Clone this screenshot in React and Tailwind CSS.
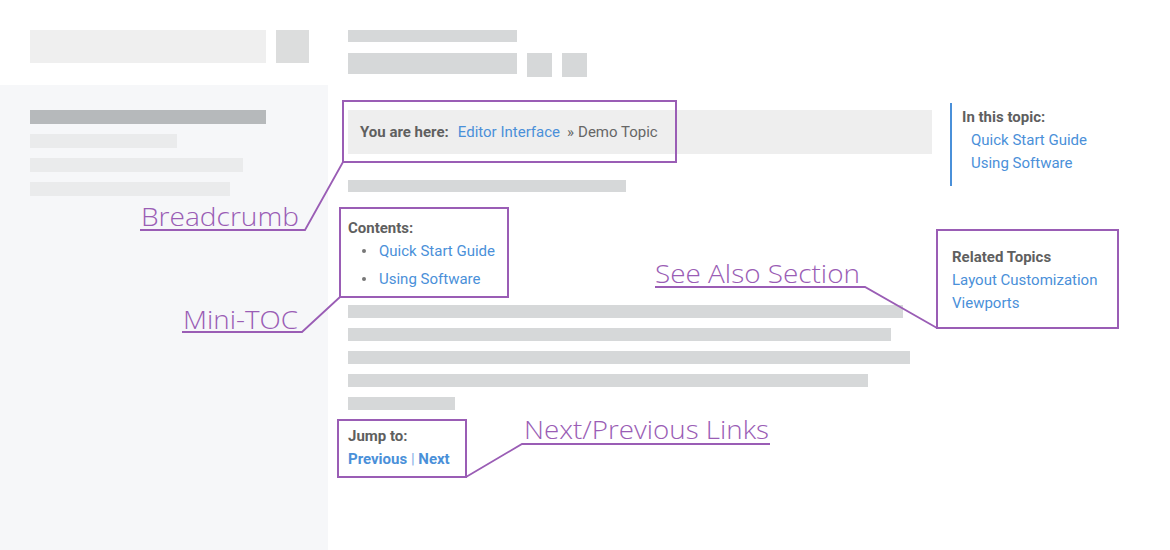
import React from "react";

/* ---------------- Skeleton pieces ---------------- */
const Bar = ({ className = "" }) => <div className={`bg-[#d6d8d9] ${className}`} />;

const PURPLE = "#9a5db5";

/* ---------------- Annotation overlay ---------------- */
const callouts = [
  { label: "Breadcrumb", x: 141, y: 226, w: 158, line: "140,230 305,230 343,162" },
  { label: "Mini-TOC", x: 183, y: 329, w: 115, line: "182,332 302,332 340,297" },
  { label: "See Also Section", x: 655, y: 283, w: 205, line: "655,287 865,287 937,328" },
  { label: "Next/Previous Links", x: 524, y: 439, w: 245, line: "770,444 522,444 466,477" },
];

const boxes = [
  { x: 343, y: 101, w: 333, h: 61 },
  { x: 340, y: 208, w: 168, h: 89 },
  { x: 338, y: 420, w: 128, h: 57 },
  { x: 937, y: 230, w: 181, h: 98 },
];

function Annotations() {
  return (
    <svg className="absolute inset-0 pointer-events-none" width="1170" height="550" viewBox="0 0 1170 550">
      {boxes.map((b, i) => (
        <rect key={i} x={b.x} y={b.y} width={b.w} height={b.h} fill="none" stroke={PURPLE} strokeWidth="2" />
      ))}
      {callouts.map((c) => (
        <g key={c.label}>
          <polyline points={c.line} fill="none" stroke={PURPLE} strokeWidth="1.8" />
          <text
            x={c.x}
            y={c.y}
            textLength={c.w}
            lengthAdjust="spacingAndGlyphs"
            fill={PURPLE}
            fontFamily="'Open Sans', 'Noto Sans', sans-serif"
            fontWeight="300"
            fontSize="26"
          >
            {c.label}
          </text>
        </g>
      ))}
    </svg>
  );
}

/* ---------------- Page ---------------- */
export default function App() {
  return (
    <div className="relative w-[1170px] h-[550px] overflow-hidden bg-white text-[15px] text-[#666] font-['Roboto','Liberation_Sans',sans-serif]">
      <div className="flex h-full">
        {/* left column */}
        <div className="w-[328px] shrink-0 flex flex-col">
          <div className="h-[85px] pt-[30px] pl-[30px] flex gap-[10px]">
            <div className="w-[236px] h-[33px] shrink-0 bg-[#efefef]" />
            <div className="w-[33px] h-[33px] shrink-0 bg-[#dcdddd]" />
          </div>
          <div className="flex-1 bg-[#f6f7f9] pt-[25px] px-[30px] flex flex-col gap-[10px]">
            <div className="w-[236px] h-[14px] bg-[#b6b9bb]" />
            <div className="w-[147px] h-[14px] bg-[#eaebec]" />
            <div className="w-[213px] h-[14px] bg-[#eaebec]" />
            <div className="w-[200px] h-[14px] bg-[#eaebec]" />
          </div>
        </div>

        {/* main column */}
        <div className="w-[604px] shrink-0 pl-[20px] pt-[30px] flex flex-col">
          <Bar className="w-[169px] h-[12px]" />
          <div className="mt-[11px] flex gap-[10px] items-start">
            <Bar className="w-[169px] h-[21px]" />
            <Bar className="w-[25px] h-[24px]" />
            <Bar className="w-[25px] h-[24px]" />
          </div>

          <div className="mt-[33px] h-[44px] bg-[#eeeeee] flex items-center pl-[12px]">
            <span className="font-bold text-[#5f5f5f]">You are here:</span>
            <a className="ml-[9px] text-[#4a90d9]">Editor Interface</a>
            <span className="ml-[7px]">»</span>
            <span className="ml-[4px]">Demo Topic</span>
          </div>

          <Bar className="mt-[26px] w-[278px] h-[12px]" />

          <div className="mt-[27px] leading-[18px] font-bold text-[#5f5f5f]">Contents:</div>
          <ul>
            {["Quick Start Guide", "Using Software"].map((t) => (
              <li key={t} className="flex items-center leading-[28px] pl-[14px]">
                <span className="w-[4px] h-[4px] rounded-full bg-[#777]" />
                <a className="ml-[13px] text-[#4a90d9]">{t}</a>
              </li>
            ))}
          </ul>

          <div className="mt-[12px] flex flex-col gap-[10px]">
            <Bar className="w-[555px] h-[13px]" />
            <Bar className="w-[543px] h-[13px]" />
            <Bar className="w-[562px] h-[13px]" />
            <Bar className="w-[520px] h-[13px]" />
            <Bar className="w-[107px] h-[13px]" />
          </div>

          <div className="mt-[15px] leading-[23px]">
            <div className="font-bold text-[#5f5f5f]">Jump to:</div>
            <div className="font-bold text-[#4a90d9]">
              Previous <span className="font-normal text-[#7fb0e6]">|</span> Next
            </div>
          </div>
        </div>

        {/* right column */}
        <div className="pl-[18px] pt-[103px] flex flex-col">
          <div className="border-l-2 border-[#4a90d9] pl-[10px] pt-[3px] pb-[11px] leading-[23px]">
            <div className="font-bold text-[#5f5f5f]">In this topic:</div>
            <div className="pl-[9px] text-[#4a90d9]">
              <div>Quick Start Guide</div>
              <div>Using Software</div>
            </div>
          </div>
          <div className="mt-[60px] pl-[2px] leading-[23px]">
            <div className="font-bold text-[#5f5f5f]">Related Topics</div>
            <div className="text-[#4a90d9]">Layout Customization</div>
            <div className="text-[#4a90d9]">Viewports</div>
          </div>
        </div>
      </div>

      <Annotations />
    </div>
  );
}
